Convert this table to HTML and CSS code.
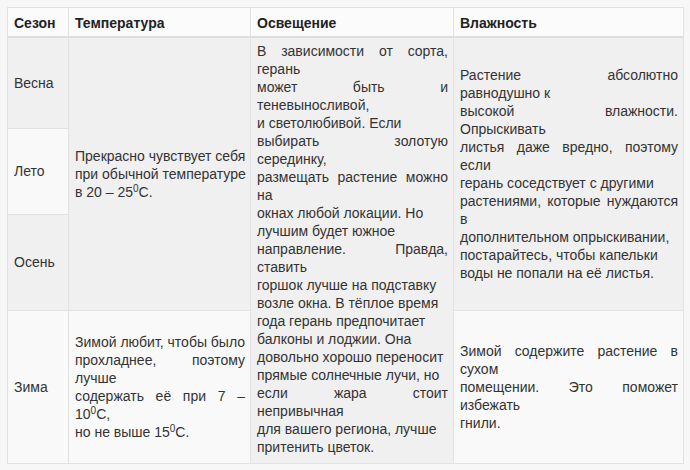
FILE: index.html
```html
<!DOCTYPE html>
<html lang="ru">
<head>
<meta charset="utf-8">
<title>Герань по сезонам</title>
<link rel="stylesheet" href="styles.css">
</head>
<body>
<table class="care">
  <colgroup>
    <col class="c-season">
    <col class="c-temp">
    <col class="c-light">
    <col class="c-hum">
  </colgroup>
  <thead>
    <tr class="head">
      <th>Сезон</th>
      <th>Температура</th>
      <th>Освещение</th>
      <th>Влажность</th>
    </tr>
  </thead>
  <tbody>
    <tr class="r1 odd">
      <td class="season">Весна</td>
      <td rowspan="3" class="text">
        <span class="ln fill">Прекрасно чувствует себя</span>
        <span class="ln fill">при обычной температуре</span>
        <span class="ln">в 20 – 25<sup>0</sup>С.</span>
      </td>
      <td rowspan="4" class="text top">
        <span class="ln fill">В зависимости от сорта,</span>
        <span class="ln">герань</span>
        <span class="ln fill">может быть и</span>
        <span class="ln">теневыносливой,</span>
        <span class="ln">и светолюбивой. Если</span>
        <span class="ln fill">выбирать золотую</span>
        <span class="ln">серединку,</span>
        <span class="ln fill">размещать растение можно</span>
        <span class="ln">на</span>
        <span class="ln">окнах любой локации. Но</span>
        <span class="ln">лучшим будет южное</span>
        <span class="ln fill">направление. Правда,</span>
        <span class="ln">ставить</span>
        <span class="ln">горшок лучше на подставку</span>
        <span class="ln">возле окна. В тёплое время</span>
        <span class="ln">года герань предпочитает</span>
        <span class="ln">балконы и лоджии. Она</span>
        <span class="ln">довольно хорошо переносит</span>
        <span class="ln">прямые солнечные лучи, но</span>
        <span class="ln fill">если жара стоит</span>
        <span class="ln">непривычная</span>
        <span class="ln">для вашего региона, лучше</span>
        <span class="ln">притенить цветок.</span>
      </td>
      <td rowspan="3" class="text">
        <span class="ln fill">Растение абсолютно</span>
        <span class="ln">равнодушно к</span>
        <span class="ln fill">высокой влажности.</span>
        <span class="ln">Опрыскивать</span>
        <span class="ln fill">листья даже вредно, поэтому</span>
        <span class="ln">если</span>
        <span class="ln">герань соседствует с другими</span>
        <span class="ln fill">растениями, которые нуждаются</span>
        <span class="ln">в</span>
        <span class="ln">дополнительном опрыскивании,</span>
        <span class="ln">постарайтесь, чтобы капельки</span>
        <span class="ln">воды не попали на её листья.</span>
      </td>
    </tr>
    <tr class="r2 even">
      <td class="season">Лето</td>
    </tr>
    <tr class="r3 odd">
      <td class="season">Осень</td>
    </tr>
    <tr class="r4 even">
      <td class="season">Зима</td>
      <td class="text">
        <span class="ln fill">Зимой любит, чтобы было</span>
        <span class="ln fill">прохладнее, поэтому</span>
        <span class="ln">лучше</span>
        <span class="ln fill">содержать её при 7 –</span>
        <span class="ln">10<sup>0</sup>С,</span>
        <span class="ln">но не выше 15<sup>0</sup>С.</span>
      </td>
      <td class="text">
        <span class="ln fill">Зимой содержите растение в</span>
        <span class="ln">сухом</span>
        <span class="ln fill">помещении. Это поможет</span>
        <span class="ln">избежать</span>
        <span class="ln">гнили.</span>
      </td>
    </tr>
  </tbody>
</table>
</body>
</html>
```
FILE: styles.css
```css
html, body {
  margin: 0;
  padding: 0;
}
body {
  background: #f7f7f7;
  padding: 7px;
  font-family: "Liberation Sans", Arial, sans-serif;
  font-size: 14px;
  line-height: 18px;
  color: #333;
}
.care {
  border-collapse: collapse;
  table-layout: fixed;
  width: 676px;
}
.c-season { width: 61px; }
.c-temp { width: 182px; }
.c-light { width: 203px; }
.c-hum { width: 230px; }

.care th,
.care td {
  border: 1px solid #e2e2e2;
  padding: 4px 5px 4px 6px;
  vertical-align: middle;
  text-align: left;
}
.care th {
  background: #fbfbfb;
  font-weight: bold;
  color: #222;
  height: 19px;
  border-bottom: 2px solid #dedede;
}
.head th { padding-top: 5px; padding-bottom: 4px; }
.odd td { background: #f0f0f0; }
.even td { background: #f9f9f9; }
.r1 { height: 91px; }
.r2 { height: 86px; }
.r3 { height: 96px; }
.r4 { height: 153px; }
.care td.top { vertical-align: top; }

.ln {
  display: block;
  white-space: nowrap;
  text-align: left;
}
.ln.fill {
  text-align: justify;
  text-align-last: justify;
}
sup {
  font-size: 10px;
  line-height: 0;
  vertical-align: 5px;
}
```
